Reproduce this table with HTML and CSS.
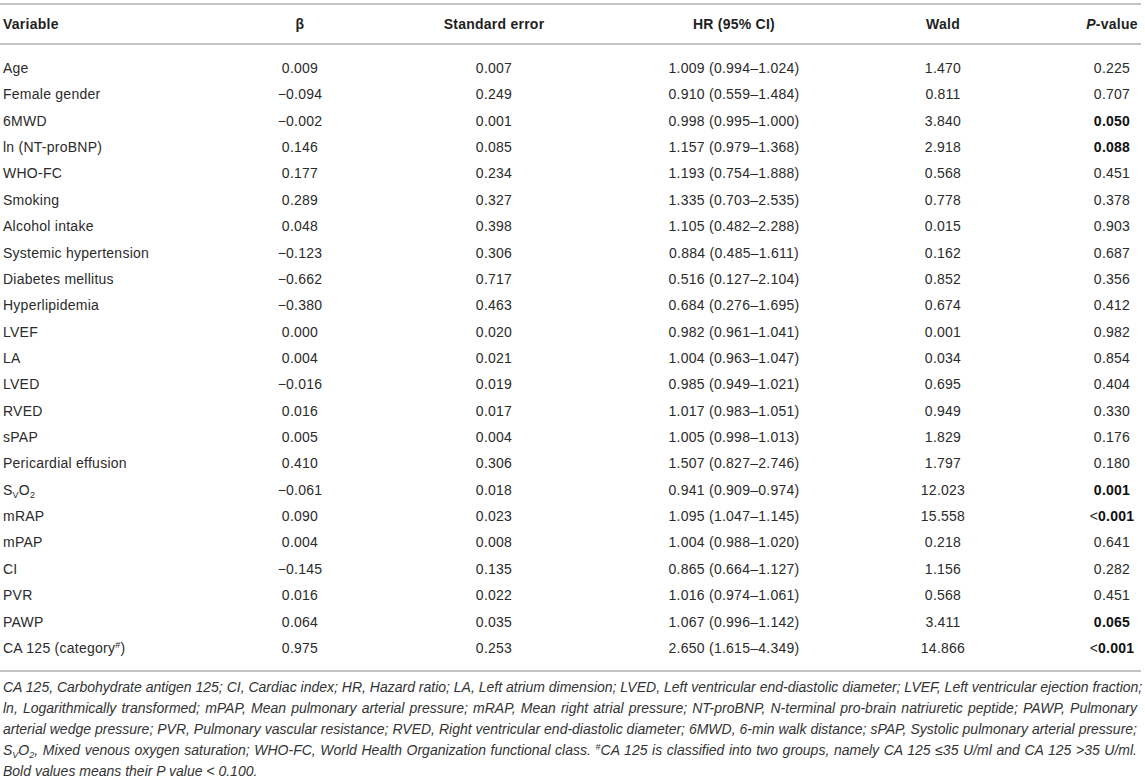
FILE: index.html
```html
<!DOCTYPE html>
<html>
<head>
<meta charset="utf-8">
<link rel="stylesheet" href="styles.css">
</head>
<body>
<div class="wrap">
<table class="tbl">
<colgroup>
<col class="c-var"><col class="c-beta"><col class="c-se"><col class="c-hr"><col class="c-wald"><col class="c-p">
</colgroup>
<thead>
<tr><th class="var">Variable</th><th>β</th><th>Standard error</th><th>HR (95% CI)</th><th>Wald</th><th class="pcol"><i>P</i>-value</th></tr>
</thead>
<tbody>
<tr><td class="var">Age</td><td>0.009</td><td>0.007</td><td>1.009 (0.994–1.024)</td><td>1.470</td><td class="pcol">0.225</td></tr>
<tr><td class="var">Female gender</td><td>−0.094</td><td>0.249</td><td>0.910 (0.559–1.484)</td><td>0.811</td><td class="pcol">0.707</td></tr>
<tr><td class="var">6MWD</td><td>−0.002</td><td>0.001</td><td>0.998 (0.995–1.000)</td><td>3.840</td><td class="pcol"><b>0.050</b></td></tr>
<tr><td class="var">ln (NT-proBNP)</td><td>0.146</td><td>0.085</td><td>1.157 (0.979–1.368)</td><td>2.918</td><td class="pcol"><b>0.088</b></td></tr>
<tr><td class="var">WHO-FC</td><td>0.177</td><td>0.234</td><td>1.193 (0.754–1.888)</td><td>0.568</td><td class="pcol">0.451</td></tr>
<tr><td class="var">Smoking</td><td>0.289</td><td>0.327</td><td>1.335 (0.703–2.535)</td><td>0.778</td><td class="pcol">0.378</td></tr>
<tr><td class="var">Alcohol intake</td><td>0.048</td><td>0.398</td><td>1.105 (0.482–2.288)</td><td>0.015</td><td class="pcol">0.903</td></tr>
<tr><td class="var">Systemic hypertension</td><td>−0.123</td><td>0.306</td><td>0.884 (0.485–1.611)</td><td>0.162</td><td class="pcol">0.687</td></tr>
<tr><td class="var">Diabetes mellitus</td><td>−0.662</td><td>0.717</td><td>0.516 (0.127–2.104)</td><td>0.852</td><td class="pcol">0.356</td></tr>
<tr><td class="var">Hyperlipidemia</td><td>−0.380</td><td>0.463</td><td>0.684 (0.276–1.695)</td><td>0.674</td><td class="pcol">0.412</td></tr>
<tr><td class="var">LVEF</td><td>0.000</td><td>0.020</td><td>0.982 (0.961–1.041)</td><td>0.001</td><td class="pcol">0.982</td></tr>
<tr><td class="var">LA</td><td>0.004</td><td>0.021</td><td>1.004 (0.963–1.047)</td><td>0.034</td><td class="pcol">0.854</td></tr>
<tr><td class="var">LVED</td><td>−0.016</td><td>0.019</td><td>0.985 (0.949–1.021)</td><td>0.695</td><td class="pcol">0.404</td></tr>
<tr><td class="var">RVED</td><td>0.016</td><td>0.017</td><td>1.017 (0.983–1.051)</td><td>0.949</td><td class="pcol">0.330</td></tr>
<tr><td class="var">sPAP</td><td>0.005</td><td>0.004</td><td>1.005 (0.998–1.013)</td><td>1.829</td><td class="pcol">0.176</td></tr>
<tr><td class="var">Pericardial effusion</td><td>0.410</td><td>0.306</td><td>1.507 (0.827–2.746)</td><td>1.797</td><td class="pcol">0.180</td></tr>
<tr><td class="var">S<sub>V</sub>O<sub>2</sub></td><td>−0.061</td><td>0.018</td><td>0.941 (0.909–0.974)</td><td>12.023</td><td class="pcol"><b>0.001</b></td></tr>
<tr><td class="var">mRAP</td><td>0.090</td><td>0.023</td><td>1.095 (1.047–1.145)</td><td>15.558</td><td class="pcol">&lt;<b>0.001</b></td></tr>
<tr><td class="var">mPAP</td><td>0.004</td><td>0.008</td><td>1.004 (0.988–1.020)</td><td>0.218</td><td class="pcol">0.641</td></tr>
<tr><td class="var">CI</td><td>−0.145</td><td>0.135</td><td>0.865 (0.664–1.127)</td><td>1.156</td><td class="pcol">0.282</td></tr>
<tr><td class="var">PVR</td><td>0.016</td><td>0.022</td><td>1.016 (0.974–1.061)</td><td>0.568</td><td class="pcol">0.451</td></tr>
<tr><td class="var">PAWP</td><td>0.064</td><td>0.035</td><td>1.067 (0.996–1.142)</td><td>3.411</td><td class="pcol"><b>0.065</b></td></tr>
<tr><td class="var">CA 125 (category<sup>#</sup>)</td><td>0.975</td><td>0.253</td><td>2.650 (1.615–4.349)</td><td>14.866</td><td class="pcol">&lt;<b>0.001</b></td></tr>
</tbody>
</table>
<div class="notes">
<span class="ln">CA 125, Carbohydrate antigen 125; CI, Cardiac index; HR, Hazard ratio; LA, Left atrium dimension; LVED, Left ventricular end-diastolic diameter; LVEF, Left ventricular ejection fraction;</span>
<span class="ln">ln, Logarithmically transformed; mPAP, Mean pulmonary arterial pressure; mRAP, Mean right atrial pressure; NT-proBNP, N-terminal pro-brain natriuretic peptide; PAWP, Pulmonary</span>
<span class="ln">arterial wedge pressure; PVR, Pulmonary vascular resistance; RVED, Right ventricular end-diastolic diameter; 6MWD, 6-min walk distance; sPAP, Systolic pulmonary arterial pressure;</span>
<span class="ln">S<sub>V</sub>O<sub>2</sub>, Mixed venous oxygen saturation; WHO-FC, World Health Organization functional class. <sup>#</sup>CA 125 is classified into two groups, namely CA 125 ≤35 U/ml and CA 125 &gt;35 U/ml.</span>
<span class="ln last">Bold values means their P value &lt; 0.100.</span>
</div>
</div>
</body>
</html>
```
FILE: styles.css
```css
html, body {
  margin: 0;
  padding: 0;
  background: #ffffff;
}
body {
  font-family: "Liberation Sans", Arial, sans-serif;
  color: #2b2b2b;
  font-size: 14px;
}
.wrap {
  width: 1141px;
  padding-top: 3px;
}
.tbl {
  width: 1141px;
  border-collapse: collapse;
  table-layout: fixed;
  letter-spacing: 0.25px;
}
.c-var { width: 220px; }
.c-beta { width: 160px; }
.c-se { width: 228px; }
.c-hr { width: 252px; }
.c-wald { width: 166px; }
.c-p { width: 115px; }
.tbl th {
  font-weight: bold;
  color: #1f1f1f;
  text-align: center;
  height: 38px;
  padding: 0;
  border-top: 2px solid #c4c4c4;
  border-bottom: 2px solid #c4c4c4;
  line-height: 18px;
}
.tbl td {
  text-align: center;
  padding: 0;
  height: 26.36px;
  line-height: 26.36px;
  white-space: nowrap;
}
.tbl .var {
  text-align: left;
  padding-left: 3px;
}
.tbl .pcol {
  text-align: center;
  padding-left: 57px;
}
.tbl tbody tr:first-child td {
  padding-top: 10px;
}
.tbl tbody tr:last-child td {
  padding-bottom: 9px;
  border-bottom: 2px solid #c4c4c4;
}
.tbl b {
  color: #111;
}
sub {
  font-size: 9px;
  line-height: 0;
  vertical-align: -3px;
}
sup {
  font-size: 9px;
  line-height: 0;
  vertical-align: 5px;
}
.notes {
  padding: 5px 4px 0 3px;
  font-style: italic;
  font-size: 14px;
  line-height: 21px;
  color: #333;
}
.ln {
  display: block;
  text-align: justify;
  text-align-last: justify;
  white-space: nowrap;
}
.ln.last {
  text-align-last: left;
}
```
